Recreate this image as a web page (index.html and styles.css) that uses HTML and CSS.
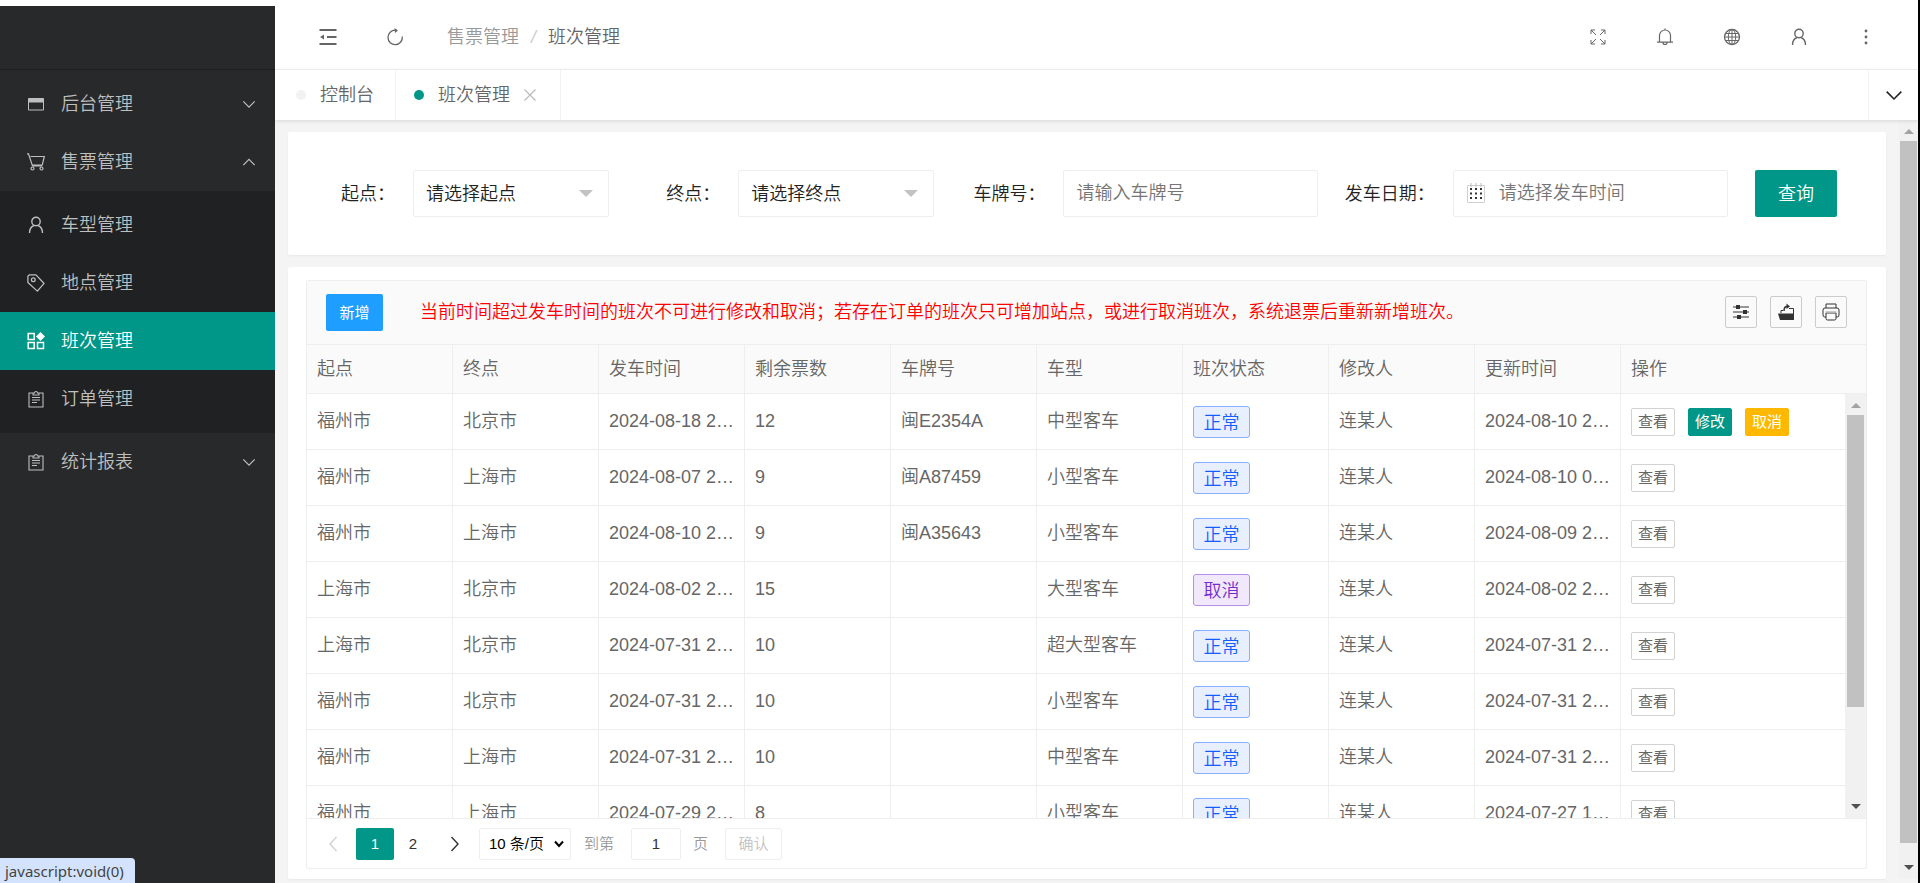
FILE: index.html
```html
<!DOCTYPE html>
<html lang="zh-CN">
<head>
<meta charset="utf-8">
<title>班次管理</title>
<link rel="stylesheet" href="styles.css">
</head>
<body>
<svg class="sprite" aria-hidden="true">
  <symbol id="i-window" viewBox="0 0 18 18"><path d="M1.500 3.500h15v11.500h-15z" fill="none" stroke="currentColor"/><path d="M1.500 3.500h15v4h-15z" fill="currentColor"/></symbol>
  <symbol id="i-cart" viewBox="0 0 18 18"><path d="M0 .800h1.500L5.500 13H15M3.500 3.500h13.800l-2 8.500H5.500" fill="none" stroke="currentColor" stroke-width="1.200"/><circle cx="5.500" cy="15.500" r="1.500" fill="none" stroke="currentColor" stroke-width="1.200"/><circle cx="14.500" cy="15.500" r="1.500" fill="none" stroke="currentColor" stroke-width="1.200"/></symbol>
  <symbol id="i-user" viewBox="0 0 18 18"><circle cx="9" cy="5.500" r="4.200" fill="none" stroke="currentColor" stroke-width="1.400"/><path d="M2.500 17c0-4 2-6.500 4.500-7.500M15.500 17c0-4-2-6.500-4.500-7.500" fill="none" stroke="currentColor" stroke-width="1.400"/></symbol>
  <symbol id="i-tag" viewBox="0 0 20 20"><path d="M1 2.500 2.500 1H10l9 9.500-7.500 8.500L1 9.500z" fill="none" stroke="currentColor" stroke-width="1.400" stroke-linejoin="round"/><circle cx="7" cy="6.500" r="2.100" fill="none" stroke="currentColor" stroke-width="1.400"/></symbol>
  <symbol id="i-apps" viewBox="0 0 18 18"><path d="M1.200 1.500h6v6h-6zM1.200 10.500h6v6h-6zM10.500 10.500h6v6h-6z" fill="none" stroke="currentColor" stroke-width="1.500"/><path d="m13.500 0 4.500 4.500L13.500 9 9 4.500z" fill="currentColor"/></symbol>
  <symbol id="i-form" viewBox="0 0 18 18"><path d="M6 3H2v14h14V3h-4M6 5V3h1.500a1.500 1.500 0 0 1 3 0H12v2zM5 7.500h8M5 10h8M5 12.500h5" fill="none" stroke="currentColor" stroke-width="1.100"/></symbol>
  <symbol id="i-down" viewBox="0 0 16 16"><path d="m1.500 5 6.500 6.500L14.500 5" fill="none" stroke="currentColor" stroke-width="1.400"/></symbol>
  <symbol id="i-up" viewBox="0 0 16 16"><path d="m1.500 11.500L8 5l6.500 6.500" fill="none" stroke="currentColor" stroke-width="1.400"/></symbol>
  <symbol id="i-prev" viewBox="0 0 12 18"><path d="M9.500 2 3 9l6.500 7" fill="none" stroke="currentColor" stroke-width="1.400"/></symbol>
  <symbol id="i-next" viewBox="0 0 12 18"><path d="M2.500 2 9 9l-6.500 7" fill="none" stroke="currentColor" stroke-width="1.400"/></symbol>
  <symbol id="i-fold" viewBox="0 0 18 18"><path d="M.500 2h17M8 9h9.500M.500 16h17" fill="none" stroke="currentColor" stroke-width="2"/><path d="M1 9l4-2.500v5z" fill="currentColor"/></symbol>
  <symbol id="i-refresh" viewBox="0 0 18 18"><path d="M9.500 2.200A7.200 7.200 0 1 0 16.300 8.500" fill="none" stroke="currentColor" stroke-width="1.300"/><path d="m8.500 0 3.500 2.500-3 2.500z" fill="currentColor"/></symbol>
  <symbol id="i-full" viewBox="0 0 18 18"><path d="M2 6V2h4M2 2l5 5M12 2h4v4M16 2l-5 5M2 12v4h4M2 16l5-5M16 12v4h-4M16 16l-5-5" fill="none" stroke="currentColor"/></symbol>
  <symbol id="i-bell" viewBox="0 0 18 18"><path d="M3.500 14V7.500a5.500 5.500 0 0 1 11 0V14M1 14.200h16M9 .500V2M7 14.500a2 2 0 0 0 4 0" fill="none" stroke="currentColor" stroke-width="1.200"/></symbol>
  <symbol id="i-globe" viewBox="0 0 18 18"><g fill="none" stroke="currentColor"><circle cx="9" cy="9" r="7.500" stroke-width="1.300"/><ellipse cx="9" cy="9" rx="3.700" ry="7.500"/><path d="M1.500 9h15M9 1.500v15M2.500 5.500h13M2.500 12.500h13"/></g></symbol>
  <symbol id="i-more" viewBox="0 0 18 18"><g fill="currentColor"><circle cx="9" cy="3" r="1.400"/><circle cx="9" cy="9" r="1.400"/><circle cx="9" cy="15" r="1.400"/></g></symbol>
  <symbol id="i-close" viewBox="0 0 12 12"><path d="m.500.500 11 11M11.500.500l-11 11" fill="none" stroke="currentColor" stroke-width="1.200"/></symbol>
  <symbol id="i-date" viewBox="0 0 18 20"><path d="M.500 2.500h17v17H.500z" fill="none" stroke="#d0d0d0"/><path d="M3 6h12M3 10.500h12M3 15h12" stroke="#333" stroke-width="2" stroke-dasharray="2 3" fill="none"/><path d="M4 0v4M9 0v4M14 0v4" stroke="#bbb"/></symbol>
  <symbol id="i-filter" viewBox="0 0 18 18"><path d="M1 4h16M1 9h16M1 14h16" stroke="currentColor"/><path d="M4 2h4v4H4zM11 7h4v4h-4zM5 12h4v4H5z" fill="currentColor"/></symbol>
  <symbol id="i-export" viewBox="0 0 18 18"><path d="M1 10.500h15l1 6.500H3z" fill="currentColor"/><path d="M4 10V7.500h2M12 5.500h4.500v11" fill="none" stroke="currentColor"/><path d="M7 8c0-3 1-4.500 3-4.500" fill="none" stroke="currentColor" stroke-width="1.500"/><path d="m9.500.500 3.500 3-3.500 2.500z" fill="currentColor"/></symbol>
  <symbol id="i-print" viewBox="0 0 18 18"><path d="M4 5V1h10v4M4 14H2.800Q1 14 1 12V7q0-2 2-2h12q2 0 2 2v5q0 2-1.800 2H14" fill="none" stroke="currentColor"/><path d="M4 10h10v5.500q0 1.500-1.500 1.500h-7Q4 17 4 15.500z" fill="none" stroke="currentColor"/><path d="M3.500 9h11" stroke="#bbb" stroke-width="1.500"/></symbol>
</svg>

<div class="app">
  <aside class="side">
    <div class="logo"></div>
    <nav class="menu">
      <a class="item" href="#"><svg class="ico"><use href="#i-window"/></svg><span>后台管理</span><svg class="arrow"><use href="#i-down"/></svg></a>
      <a class="item" href="#"><svg class="ico"><use href="#i-cart"/></svg><span>售票管理</span><svg class="arrow"><use href="#i-up"/></svg></a>
      <div class="sub">
        <a class="item" href="#"><svg class="ico"><use href="#i-user"/></svg><span>车型管理</span></a>
        <a class="item" href="#"><svg class="ico"><use href="#i-tag"/></svg><span>地点管理</span></a>
        <a class="item active" href="#"><svg class="ico"><use href="#i-apps"/></svg><span>班次管理</span></a>
        <a class="item" href="#"><svg class="ico"><use href="#i-form"/></svg><span>订单管理</span></a>
      </div>
      <a class="item" href="#"><svg class="ico"><use href="#i-form"/></svg><span>统计报表</span><svg class="arrow"><use href="#i-down"/></svg></a>
    </nav>
  </aside>

  <div class="main">
    <header class="head">
      <button class="hbtn" aria-label="收起菜单"><svg><use href="#i-fold"/></svg></button>
      <button class="hbtn" aria-label="刷新"><svg><use href="#i-refresh"/></svg></button>
      <nav class="crumb"><a href="#">售票管理</a><i>/</i><span>班次管理</span></nav>
      <div class="tools">
        <button class="hbtn" aria-label="全屏"><svg><use href="#i-full"/></svg></button>
        <button class="hbtn" aria-label="消息"><svg><use href="#i-bell"/></svg></button>
        <button class="hbtn" aria-label="语言"><svg><use href="#i-globe"/></svg></button>
        <button class="hbtn" aria-label="用户"><svg><use href="#i-user"/></svg></button>
        <button class="hbtn" aria-label="更多"><svg><use href="#i-more"/></svg></button>
      </div>
    </header>
    <div class="tabs">
      <a class="tab home" href="#"><b class="dot"></b>控制台</a>
      <a class="tab" href="#"><b class="dot on"></b>班次管理<svg class="close"><use href="#i-close"/></svg></a>
      <button class="tabmore" aria-label="标签操作"><svg><use href="#i-down"/></svg></button>
    </div>

    <div class="view">
      <div class="content">
        <form class="card search">
          <div class="field f1"><label for="from">起点：</label><div class="ctl"><select id="from"><option>请选择起点</option></select></div></div>
          <div class="field f1"><label for="to">终点：</label><div class="ctl"><select id="to"><option>请选择终点</option></select></div></div>
          <div class="field f2"><label for="plate">车牌号：</label><div class="ctl"><input id="plate" type="text" placeholder="请输入车牌号"></div></div>
          <div class="field f3"><label for="date">发车日期：</label><div class="ctl date"><svg><use href="#i-date"/></svg><input id="date" type="text" placeholder="请选择发车时间"></div></div>
          <button class="query" type="button">查询</button>
        </form>

        <section class="card list">
          <div class="box">
            <div class="bar">
              <button class="add">新增</button>
              <span class="tip">当前时间超过发车时间的班次不可进行修改和取消；若存在订单的班次只可增加站点，或进行取消班次，系统退票后重新新增班次。</span>
              <button class="tool" aria-label="筛选列"><svg><use href="#i-filter"/></svg></button>
              <button class="tool" aria-label="导出"><svg><use href="#i-export"/></svg></button>
              <button class="tool" aria-label="打印"><svg><use href="#i-print"/></svg></button>
            </div>
            <div class="scroll">
              <table>
                <colgroup><col class="c"><col class="c"><col class="c"><col class="c"><col class="c"><col class="c"><col class="c"><col class="c"><col class="c"><col></colgroup>
                <thead><tr><th>起点</th><th>终点</th><th>发车时间</th><th>剩余票数</th><th>车牌号</th><th>车型</th><th>班次状态</th><th>修改人</th><th>更新时间</th><th>操作</th></tr></thead>
                <tbody>
                  <tr><td>福州市</td><td>北京市</td><td>2024-08-18 2…</td><td>12</td><td>闽E2354A</td><td>中型客车</td><td><span class="tag">正常</span></td><td>连某人</td><td>2024-08-10 2…</td><td><div class="ops"><button>查看</button><button class="edit">修改</button><button class="cancel">取消</button></div></td></tr>
                  <tr><td>福州市</td><td>上海市</td><td>2024-08-07 2…</td><td>9</td><td>闽A87459</td><td>小型客车</td><td><span class="tag">正常</span></td><td>连某人</td><td>2024-08-10 0…</td><td><div class="ops"><button>查看</button></div></td></tr>
                  <tr><td>福州市</td><td>上海市</td><td>2024-08-10 2…</td><td>9</td><td>闽A35643</td><td>小型客车</td><td><span class="tag">正常</span></td><td>连某人</td><td>2024-08-09 2…</td><td><div class="ops"><button>查看</button></div></td></tr>
                  <tr><td>上海市</td><td>北京市</td><td>2024-08-02 2…</td><td>15</td><td></td><td>大型客车</td><td><span class="tag off">取消</span></td><td>连某人</td><td>2024-08-02 2…</td><td><div class="ops"><button>查看</button></div></td></tr>
                  <tr><td>上海市</td><td>北京市</td><td>2024-07-31 2…</td><td>10</td><td></td><td>超大型客车</td><td><span class="tag">正常</span></td><td>连某人</td><td>2024-07-31 2…</td><td><div class="ops"><button>查看</button></div></td></tr>
                  <tr><td>福州市</td><td>北京市</td><td>2024-07-31 2…</td><td>10</td><td></td><td>小型客车</td><td><span class="tag">正常</span></td><td>连某人</td><td>2024-07-31 2…</td><td><div class="ops"><button>查看</button></div></td></tr>
                  <tr><td>福州市</td><td>上海市</td><td>2024-07-31 2…</td><td>10</td><td></td><td>中型客车</td><td><span class="tag">正常</span></td><td>连某人</td><td>2024-07-31 2…</td><td><div class="ops"><button>查看</button></div></td></tr>
                  <tr><td>福州市</td><td>上海市</td><td>2024-07-29 2…</td><td>8</td><td></td><td>小型客车</td><td><span class="tag">正常</span></td><td>连某人</td><td>2024-07-27 1…</td><td><div class="ops"><button>查看</button></div></td></tr>
                </tbody>
              </table>
              <div class="vbar inner"><i class="up"></i><b></b><i class="dn"></i></div>
            </div>
            <div class="pager">
              <button class="nav dim" aria-label="上一页"><svg><use href="#i-prev"/></svg></button>
              <button class="pg cur">1</button>
              <button class="pg">2</button>
              <button class="nav" aria-label="下一页"><svg><use href="#i-next"/></svg></button>
              <div class="size"><select aria-label="每页条数"><option>10 条/页</option></select><svg><path d="m2 3.500 4 4.500 4-4.500" fill="none" stroke="#000" stroke-width="2"/></svg></div>
              <label for="goto">到第</label><input id="goto" type="text" value="1"><span class="unit">页</span>
              <button class="ok">确认</button>
            </div>
          </div>
        </section>
      </div>
      <div class="vbar outer"><i class="up"></i><b></b><i class="dn"></i></div>
    </div>
  </div>
  <div class="status">javascript:void(0)</div>
</div>
</body>
</html>
```
FILE: styles.css
```css
* { box-sizing: border-box; }
body {
  margin: 0;
  font: 350 18px/24px "Liberation Sans", "Noto Sans CJK SC", sans-serif;
  color: #222;
  background: #fff;
}
button, input, select { font: inherit; color: inherit; margin: 0; padding: 0; border: 0; background: none; border-radius: 2px; }
a { color: inherit; text-decoration: none; }
svg { display: block; flex: none; }
.sprite { position: absolute; width: 0; height: 0; }

.app { position: relative; display: flex; height: 100vh; padding-top: 6px; border-right: 2px solid #000; overflow: hidden; }

/* side menu */
.side { flex: none; width: 275px; background: #28292b; color: #bebfbf; }
.logo { height: 64px; border-bottom: 1px solid #1e1f21; }
.menu { padding-top: 5px; }
.item { display: flex; align-items: center; gap: 16px; height: 58px; padding: 0 19px 0 27px; }
.item .ico { width: 18px; height: 18px; }
.item .arrow { width: 14px; height: 14px; margin-left: auto; }
.sub { padding: 5px 0; background: #202122; border-radius: 2px; }
.active { background: #009688; color: #fff; }

/* header */
.main { flex: 1; min-width: 0; display: flex; flex-direction: column; }
.head { display: flex; align-items: center; height: 64px; padding: 0 19px 2px 19px; border-bottom: 1px solid #f2f2f2; color: #666; }
.hbtn { display: flex; align-items: center; justify-content: center; width: 67px; height: 60px; }
.hbtn svg { width: 18px; height: 18px; }
.crumb { display: flex; gap: 12px; margin-left: 19px; }
.crumb a { color: #999; }
.crumb i { color: #ccc; }
.tools { display: flex; margin-left: auto; }

.tabs { position: relative; z-index: 1; display: flex; height: 50px; background: #fff; box-shadow: 0 1px 4px rgba(0,0,0,.12); color: #666; }
.tab { display: flex; align-items: center; padding: 0 18px; border-right: 1px solid #f2f2f2; }
.home { padding: 0 21px; }
.dot { width: 10px; height: 10px; margin-right: 14px; border-radius: 50%; background: #f2f2f2; }
.dot.on { background: #009688; }
.close { width: 12px; height: 12px; margin: 0 6px 0 14px; color: #bbb; }
.tabmore { display: flex; align-items: center; justify-content: center; width: 50px; margin-left: auto; border-left: 1px solid #f2f2f2; border-radius: 0; color: #222; }
.tabmore svg { width: 18px; height: 18px; }

/* page */
.view { flex: 1; min-height: 0; display: flex; padding-bottom: 4px; background: #f4f4f4; }
.content { flex: 1; min-width: 0; display: flex; flex-direction: column; gap: 12px; padding: 12px 13px 0 13px; }
.card { background: #fff; border-radius: 2px; box-shadow: 0 1px 2px rgba(0,0,0,.05); }
.search { display: flex; gap: 12px; padding: 38px 49px 38px 8px; }
.field { display: flex; align-items: center; min-width: 0; }
.field label { flex: none; width: 117px; padding-right: 18px; text-align: right; white-space: nowrap; }
.f1 { flex: 313 1 0; }
.f2 { flex: 371 1 0; }
.f3 { flex: 398 1 0; }
.f3 label { width: 123px; }
.ctl { position: relative; flex: 1; min-width: 0; }
.ctl select, .ctl input { display: block; width: 100%; height: 47px; padding: 0 12px; border: 1px solid #eee; appearance: none; }
.ctl:has(select)::after { content: ""; position: absolute; right: 16px; top: 20px; border: 7px solid transparent; border-top-color: #c2c2c2; border-bottom: 0; pointer-events: none; }
.ctl input::placeholder { color: #757575; }
.date svg { position: absolute; left: 14px; top: 13px; width: 18px; height: 20px; }
.ctl.date input { padding-left: 45px; }
.query { flex: none; width: 82px; height: 47px; margin-left: 15px; background: #009688; color: #fff; }

.list { flex: 1; min-height: 0; display: flex; padding: 13px 19px 10px 18px; }
.box { flex: 1; min-width: 0; display: flex; flex-direction: column; border: 1px solid #eee; border-radius: 2px; color: #666; }
.bar { flex: none; display: flex; align-items: center; height: 64px; padding: 0 19px; background: #fafafa; border-bottom: 1px solid #eee; }
.add { flex: none; width: 57px; height: 37px; background: #1e9fff; color: #fff; font-size: 15px; }
.tip { margin: 0 auto 0 37px; padding-bottom: 2px; color: #f00; white-space: nowrap; }
.tool { flex: none; display: flex; align-items: center; justify-content: center; width: 32px; height: 32px; margin: 0 0 2px 13px; border: 1px solid #ccc; color: #333; }
.tool svg { width: 18px; height: 18px; }

.scroll { position: relative; flex: 1; min-height: 0; overflow: hidden; border-bottom: 1px solid #eee; }
table { width: 100%; table-layout: fixed; border-collapse: separate; border-spacing: 0; }
.c { width: 146px; }
th, td { padding: 0 5px 0 10px; border-bottom: 1px solid #eee; border-right: 1px solid #eee; font-weight: inherit; text-align: left; overflow: hidden; text-overflow: ellipsis; white-space: nowrap; }
th { height: 49px; background: #fafafa; }
td { height: 56px; padding-bottom: 2px; }
td:has(.tag), td:has(.ops) { padding-bottom: 0; }
th:last-child, td:last-child { border-right: 0; }
.tag { display: block; width: 57px; height: 32px; border: 1px solid #8aaeff; border-radius: 3px; background: #e8f0ff; color: #165dff; line-height: 32px; text-align: center; }
.tag.off { border-color: #b68fe8; background: #f1e9fb; color: #722ed1; }
.ops { display: flex; gap: 13px; }
.ops button { width: 44px; height: 28px; border: 1px solid #d2d2d2; font-size: 15px; }
.ops .edit { border-color: #009688; background: #009688; color: #fff; }
.ops .cancel { border-color: #ffb800; background: #ffb800; color: #fff; }
.add, .ops button { font-weight: 400; }

.vbar { display: flex; flex-direction: column; align-items: center; justify-content: space-between; background: #f1f1f1; }
.vbar i { flex: none; border: 5px solid transparent; }
.vbar .up { border-bottom-color: #a3a3a3; border-top: 0; }
.vbar .dn { border-top-color: #505050; border-bottom: 0; }
.vbar b { width: 17px; background: #c1c1c1; }
.inner { position: absolute; right: 0; top: 49px; bottom: 0; width: 21px; padding: 9px 0; }
.inner b { flex: 0 0 72%; margin: 7px 0 auto; }
.outer { flex: none; width: 19px; padding: 9px 0; }
.outer b { flex: 1; margin: 7px 0 22px; }

.pager { flex: none; display: flex; align-items: center; height: 49px; padding: 0 8px; color: #333; font-size: 15px; }
.pager button { height: 32px; }
.nav { display: flex; align-items: center; justify-content: center; width: 36px; }
.nav svg { width: 12px; height: 18px; }
.dim { color: #d2d2d2; }
.pg { width: 38px; }
.pager .nav:first-child { margin-right: 5px; }
.cur { background: #009688; color: #fff; }
.pg + .nav { margin-left: 5px; }
.size { position: relative; margin: 0 13px 0 6px; }
.size select { width: 92px; height: 32px; padding-left: 9px; border: 1px solid #eee; appearance: none; color: #000; }
.size svg { position: absolute; right: 6px; top: 10px; width: 12px; height: 12px; pointer-events: none; }
.pager label, .unit { color: #999; }
.pager input { width: 50px; height: 32px; margin: 0 12px 0 17px; border: 1px solid #eee; text-align: center; }
.ok { width: 57px; margin-left: 17px; }
.pager .ok { border: 1px solid #eee; color: #c2c2c2; }

.status { position: absolute; left: 0; bottom: 0; height: 25px; padding: 0 11px 0 5px; border-top-right-radius: 4px; background: #d3e3fd; color: #444; font: 400 15px/27px "Noto Sans", "Open Sans", sans-serif; }
```
